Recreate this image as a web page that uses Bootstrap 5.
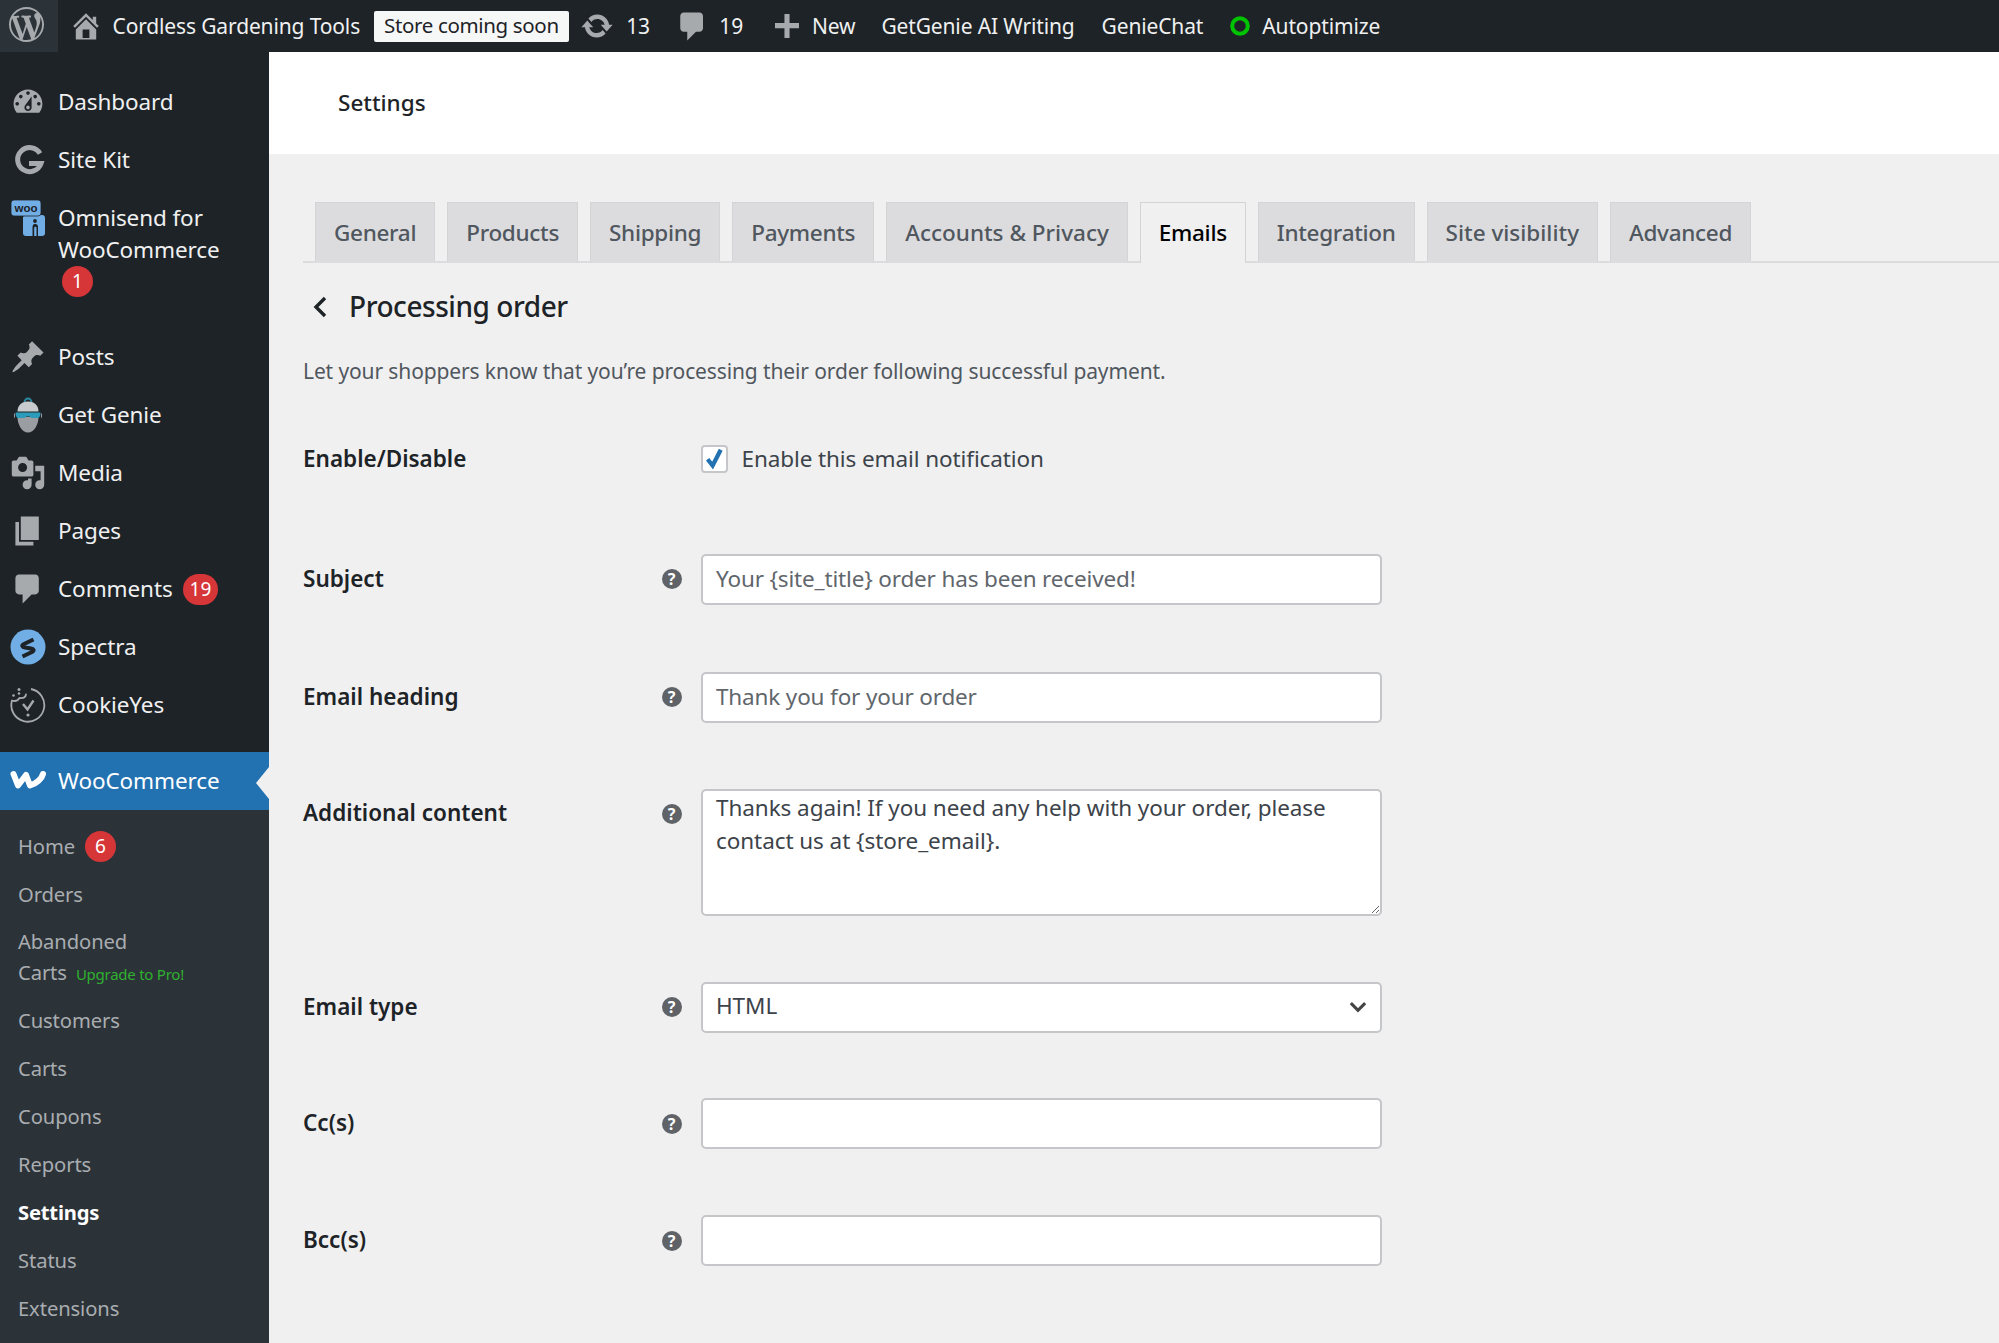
<!DOCTYPE html>
<html lang="en">
<head>
<meta charset="utf-8">
<title>Settings</title>
<link href="https://cdn.jsdelivr.net/npm/bootstrap@5.3.0/dist/css/bootstrap.min.css" rel="stylesheet">
<style>
html,body{height:100%;}
body{font-family:"Noto Sans","Open Sans",sans-serif;background:#f0f0f0;color:#3c434a;overflow:hidden;}
.wp-top{height:52px;flex:none;background:#1d2327;color:#f0f0f1;font-size:21px;letter-spacing:-.14px;line-height:50px;white-space:nowrap;}
.wp-logo{width:58px;height:52px;background:#2c3338;padding:7px 0 0 9px;flex:none;}
.wp-logo svg{width:35px;height:35px;fill:#a7aaad;display:block;}
.top-ico{fill:#a7aaad;flex:none;}
.ti-home{margin-left:11px;}
.tt-title{margin-left:9.500px;}
.soon{height:31px;line-height:29px;background:#f6f7f7;color:#1d2327;border-radius:2px;padding:0 10px;margin:0 11.500px 0 14px;font-size:20.5px;letter-spacing:-.35px;}
.tt-13{margin-left:12px;}
.ti-26{margin-left:24.700px;}
.tt-19{margin-left:9.700px;}
.ti-29{margin-left:29px;}
.tt-new{margin-left:9.800px;}
.tt-26{margin-left:26px;}
.tt-27{margin-left:27px;}
.tt-12{margin-left:12px;}
.split{min-height:0;}
.wp-side{width:269px;flex:none;background:#1d2327;color:#f0f0f1;font-size:22.5px;letter-spacing:-.1px;}
.side-top{padding-top:21px;}
.side-item{height:58px;padding:0 0 0 58px;position:relative;}
.side-item>svg{position:absolute;left:10px;top:50%;transform:translateY(-50%);width:36px;height:36px;}
.ico-grey{fill:#a7aaad;}
.side-multi{height:139px;padding-top:13px;line-height:32px;}
.side-multi>svg{top:11px;transform:none;height:37px;}
.side-cur{height:58px;flex:none;background:#2271b1;color:#fff;margin-top:18px;padding:0 0 0 58px;position:relative;}
.side-cur>svg{position:absolute;left:10px;top:13px;width:36px;height:28px;}
.side-cur::after{content:"";position:absolute;right:0;top:15px;border:16px solid transparent;border-right:13px solid #f0f0f0;border-left:0;}
.side-sub{background:#2c3338;color:#a9adb1;font-size:20.2px;padding:12px 0 0 18px;}
.sub-item{height:48px;}
.sub-two{height:78px;line-height:31px;padding-top:8px;}
.sub-on{color:#fff;font-weight:700;letter-spacing:-.2px;}
.up-pro{color:#2fb02f;font-size:15px;letter-spacing:-.25px;margin-left:9px;}
.wp-pill{background:#d63638;color:#fff;font-weight:400;font-size:19px;letter-spacing:0;min-width:31px;height:31px;line-height:30px;padding:0 7px;border-radius:16px;display:inline-block;text-align:center;margin-left:10px;}
.pill-block{display:block;width:31px;margin-left:4px;}
.main-col{min-width:0;}
.page-head{height:102px;background:#fff;padding:0 0 1px 69px;color:#1d2327;font-size:22.5px;font-weight:500;}
.page-body{padding:48px 0 0 34px;letter-spacing:-.3px;}
.wc-tabs{border-bottom:2px solid #dcdcde;gap:12px;padding-left:12px;}
.wc-tabs .nav-link{height:59px;line-height:60px;padding:0 18px;margin-bottom:0;background:#dcdcde;border:1px solid #d4d4d6;border-bottom:0;border-radius:0;color:#50575e;font-size:22.5px;font-weight:500;letter-spacing:-.3px;}
.wc-tabs .nav-link.tab-wide{letter-spacing:0;}
.wc-tabs .nav-link.active{background:#f0f0f0;color:#000;border-color:#d4d4d6;height:61px;margin-bottom:-2px;border-bottom:0;}
.title-row{margin-top:24px;height:40px;}
.title-row h1{font-size:28px;font-weight:500;color:#1d2327;margin:0 0 0 22px;letter-spacing:-.45px;}
.back-ico{width:14px;height:22px;margin-left:10px;flex:none;}
.desc{margin:28px 0 0;height:32px;line-height:33px;font-size:21px;color:#50575e;letter-spacing:-.12px;}
.rows{margin-top:57.500px;}
.f-row{display:flex;align-items:flex-start;}
.f-lab{width:357px;flex:none;font-size:22.5px;font-weight:600;color:#1d2327;height:51px;line-height:49px;letter-spacing:0;margin:0;}
.f-help{width:41px;height:51px;flex:none;padding-left:1.500px;}
.help-dot{width:20px;height:20px;border-radius:50%;background:#5f6266;color:#fff;font-size:16px;font-weight:700;line-height:20px;text-align:center;letter-spacing:0;}
.f-field{width:681px;flex:none;}
.wc-ctl{height:51px;border:2px solid #c5c6c9;border-radius:5px;background-color:#fff;color:#3c434a;font-size:22.5px;padding:0 13px 2px;letter-spacing:-.07px;box-shadow:none;}
.wc-ctl::placeholder{color:#5f666c;opacity:1;letter-spacing:-.16px;}
textarea.wc-ctl{height:127px;line-height:33px;padding:0 13px;}
select.wc-ctl{height:51.5px;padding:0 13px 2px;background-image:url("data:image/svg+xml,%3Csvg xmlns='http://www.w3.org/2000/svg' viewBox='0 0 20 20'%3E%3Cpath d='M3.500 6.500l6.500 6.500 6.500-6.500' fill='none' stroke='%23444' stroke-width='2.800'/%3E%3C/svg%3E");background-position:right 11px center;background-size:22px;}
.wc-check{width:27px;height:28px;margin:0;border:2px solid #c5c6c9;border-radius:5px;flex:none;background-color:#fff;}
.wc-check:checked{background-color:#fff;border-color:#c5c6c9;background-size:25px;background-image:url("data:image/svg+xml,%3Csvg xmlns='http://www.w3.org/2000/svg' viewBox='0 0 20 20'%3E%3Cpath d='M4.500 10l4 5L15 2.500' fill='none' stroke='%232271b1' stroke-width='3.400'/%3E%3C/svg%3E");}
.check-txt{font-size:22.5px;margin-left:13.500px;letter-spacing:-.1px;color:#3c434a;line-height:26px;}
.row-en{height:28px;margin-bottom:81px;}
.row-en .f-lab{height:28px;line-height:28px;}
.gap67{margin-bottom:67px;}
.gap66{margin-bottom:66px;}
.gap65{margin-bottom:65px;}
.f-lab.ta-lab{height:47px;line-height:47px;}
.ta-help{padding-top:15px;}
</style>
</head>
<body class="d-flex flex-column">

<header class="wp-top d-flex align-items-center">
  <div class="wp-logo">
    <svg viewBox="0 0 20 20"><path d="M20 10c0-5.510-4.490-10-10-10C4.480 0 0 4.490 0 10c0 5.520 4.480 10 10 10 5.510 0 10-4.480 10-10zM7.780 15.370L4.370 6.220c.550-.020 1.170-.080 1.170-.080.500-.060.440-1.130-.060-1.110 0 0-1.450.110-2.370.110-.180 0-.370 0-.580-.010C4.120 2.690 6.870 1.110 10 1.110c2.330 0 4.450.870 6.050 2.340-.680-.110-1.650.390-1.650 1.580 0 .740.450 1.360.900 2.100.350.610.550 1.360.550 2.460 0 1.490-1.400 5-1.400 5l-3.030-8.370c.540-.020.820-.170.820-.170.500-.050.440-1.250-.060-1.220 0 0-1.440.120-2.380.120-.870 0-2.330-.120-2.330-.120-.500-.030-.560 1.200-.060 1.220l.920.080 1.260 3.410zM17.410 10c.240-.640.740-1.870.430-4.250.700 1.290 1.050 2.710 1.050 4.250 0 3.290-1.730 6.240-4.400 7.780.970-2.590 1.940-5.200 2.920-7.780zM6.100 18.090C3.120 16.650 1.110 13.530 1.110 10c0-1.300.230-2.480.720-3.590C3.250 10.300 4.670 14.200 6.100 18.090zm4.030-6.630l2.580 6.980c-.860.290-1.760.450-2.710.450-.790 0-1.570-.110-2.290-.330.810-2.380 1.620-4.740 2.420-7.100z"/></svg>
  </div>
  <svg class="top-ico ti-home" width="34" height="34" viewBox="0 0 20 20"><path d="M16 8.500l1.530 1.530-1.060 1.060L10 4.620l-6.470 6.470-1.060-1.060L10 2.500l4 4v-2h2v4zm-6-2.460l6 5.990V18H4v-5.970zM12 17v-5H8v5h4z"/></svg>
  <span class="tt-title">Cordless Gardening Tools</span>
  <span class="soon">Store coming soon</span>
  <svg class="top-ico" width="34" height="34" viewBox="0 0 20 20"><path d="M10.200 3.280c3.530 0 6.430 2.610 6.920 6h2.080l-3.500 4-3.500-4h2.320c-.450-1.970-2.210-3.450-4.320-3.450-1.450 0-2.730.710-3.540 1.780L4.950 5.660C6.230 4.200 8.110 3.280 10.200 3.280zm-.400 13.440c-3.520 0-6.430-2.610-6.920-6H.800l3.500-4c1.170 1.330 2.330 2.670 3.500 4H5.480c.450 1.970 2.210 3.450 4.320 3.450 1.450 0 2.730-.710 3.540-1.780l1.710 1.950c-1.280 1.460-3.150 2.380-5.250 2.380z"/></svg>
  <span class="tt-13">13</span>
  <svg class="top-ico ti-26" width="35" height="35" viewBox="0 0 20 20"><path d="M5 2h9c1.100 0 2 .900 2 2v7c0 1.100-.900 2-2 2h-2l-5 5v-5H5c-1.100 0-2-.900-2-2V4c0-1.100.900-2 2-2z"/></svg>
  <span class="tt-19">19</span>
  <svg class="top-ico ti-29" width="30" height="30" viewBox="0 0 20 20"><path d="M18 8v3.500h-6.300V18H8.300V11.500H2V8h6.300V2h3.400v6z"/></svg>
  <span class="tt-new">New</span>
  <span class="tt-26">GetGenie AI Writing</span>
  <span class="tt-27">GenieChat</span>
  <svg class="tt-27" width="20" height="20" viewBox="0 0 20 20"><circle cx="10" cy="10" r="7.800" fill="none" stroke="#00c400" stroke-width="4"/></svg>
  <span class="tt-12">Autoptimize</span>
</header>

<div class="d-flex flex-grow-1 split">
  <nav class="wp-side d-flex flex-column">
    <div class="side-top">
      <div class="side-item d-flex align-items-center"><svg class="ico-grey" viewBox="0 0 20 20"><path d="M3.760 16h12.480c1.100-1.370 1.760-3.110 1.760-5 0-4.420-3.580-8-8-8s-8 3.580-8 8c0 1.890.660 3.630 1.760 5zM10 4c.550 0 1 .450 1 1s-.450 1-1 1-1-.450-1-1 .450-1 1-1zM6 6c.550 0 1 .450 1 1s-.450 1-1 1-1-.450-1-1 .450-1 1-1zm8 0c.550 0 1 .450 1 1s-.450 1-1 1-1-.450-1-1 .450-1 1-1zm-5.370 5.550L12 7v6c0 1.100-.900 2-2 2s-2-.900-2-2c0-.570.240-1.080.630-1.450zM4 10c.550 0 1 .450 1 1s-.450 1-1 1-1-.450-1-1 .450-1 1-1zm12 0c.550 0 1 .450 1 1s-.450 1-1 1-1-.450-1-1 .450-1 1-1zm-5 3c0-.550-.450-1-1-1s-1 .450-1 1 .450 1 1 1 1-.450 1-1z"/></svg>Dashboard</div>
      <div class="side-item d-flex align-items-center"><svg viewBox="0 0 36 36"><path d="M30 11.500A12 12 0 1 0 31 21.500H19" fill="none" stroke="#a7aaad" stroke-width="5"/></svg>Site Kit</div>
      <div class="side-item side-multi">
        <svg viewBox="0 0 36 37"><path d="M15 15h17a3 3 0 0 1 3 3v15a3 3 0 0 1-3 3H16a3 3 0 0 1-3-3V17z" fill="#72aee6"/><rect x="1" y="0" width="30" height="16" rx="3" fill="#72aee6" stroke="#1d2327" stroke-width=".8"/><text x="16" y="12" font-family="Liberation Sans,sans-serif" font-weight="700" font-size="11.500" letter-spacing="0" text-anchor="middle" fill="#1d2327">woo</text><circle cx="25" cy="21" r="1.900" fill="#1d2327"/><path d="M22.500 36v-9c0-2.500 1.500-3 3-3s2.500 1 2.500 3v9h-1.500v-8.500c-.5-1-1.800-1-2.300 0V36z" fill="#1d2327"/></svg>
        Omnisend for WooCommerce<span class="wp-pill pill-block">1</span>
      </div>
      <div class="side-item d-flex align-items-center"><svg class="ico-grey" viewBox="0 0 20 20"><path d="M10.440 3.020l1.820-1.820 6.360 6.350-1.830 1.820c-1.050-.680-2.480-.570-3.410.360l-.750.750c-.920.930-1.040 2.350-.350 3.410l-1.830 1.820-2.410-2.410-2.800 2.790c-.420.420-3.380 2.710-3.800 2.290s1.860-3.390 2.280-3.810l2.790-2.790L4.100 9.360l1.830-1.820c1.050.690 2.480.570 3.400-.360l.750-.750c.930-.920 1.050-2.350.360-3.410z"/></svg>Posts</div>
      <div class="side-item d-flex align-items-center"><svg viewBox="0 0 36 36"><path d="M14.500 5a3.500 3.500 0 0 1 7 0" fill="none" stroke="#2a8ba5" stroke-width="1.800"/><path d="M7.500 20c0 6 3 12 6 14 3 2 6 2 9 0 3-2 6-8 6-14z" fill="#9a9ea3"/><path d="M18 4.500C11 4.500 7.500 9 7.500 14.500h21C28.500 9 25 4.500 18 4.500z" fill="#c8cbce"/><path d="M5.500 15.500c0 2.500.5 4.500 2 5.500h7l2-1.500h3l2 1.500h7c1.500-1 2-3 2-5.500z" fill="#2a9bb8"/><path d="M5 16c-1.500 1-1.500 4 0 5.500zM31 16c1.500 1 1.500 4 0 5.500z" fill="#9a9ea3"/></svg>Get Genie</div>
      <div class="side-item d-flex align-items-center"><svg class="ico-grey" viewBox="0 0 20 20"><path d="M13 11V4c0-.550-.450-1-1-1h-1.670L9 1H5L3.670 3H2c-.550 0-1 .450-1 1v7c0 .550.450 1 1 1h10c.550 0 1-.450 1-1zM7 4.500c1.380 0 2.500 1.120 2.500 2.500S8.380 9.500 7 9.500 4.500 8.380 4.500 7 5.620 4.500 7 4.500zM14 6h5v10.500c0 1.380-1.120 2.500-2.500 2.500S14 17.880 14 16.500s1.120-2.500 2.500-2.500c.170 0 .340.020.500.050V9h-3V6zm-4 8.050V13h2v3.500c0 1.380-1.120 2.500-2.500 2.500S7 17.880 7 16.500 8.120 14 9.500 14c.170 0 .340.020.500.050z"/></svg>Media</div>
      <div class="side-item d-flex align-items-center"><svg class="ico-grey" viewBox="0 0 20 20"><path d="M6 15V2h10v13H6zm-1 1h8v2H3V5h2v11z"/></svg>Pages</div>
      <div class="side-item d-flex align-items-center"><svg class="ico-grey" viewBox="0 0 20 20"><path d="M5 2h9c1.100 0 2 .900 2 2v7c0 1.100-.900 2-2 2h-2l-5 5v-5H5c-1.100 0-2-.900-2-2V4c0-1.100.900-2 2-2z"/></svg>Comments<span class="wp-pill">19</span></div>
      <div class="side-item d-flex align-items-center"><svg viewBox="0 0 36 36"><circle cx="18" cy="18" r="17.500" fill="#72aee6"/><path d="M23.500 10.500L14 15c-3 1.500-1.500 3.200 1 3.600l6 .8c3 .6 3.500 2.100 1 3.600l-9.500 4.500" fill="none" stroke="#1d2327" stroke-width="4" stroke-linejoin="round"/></svg>Spectra</div>
      <div class="side-item d-flex align-items-center"><svg viewBox="0 0 36 36" fill="none" stroke="#a7aaad" stroke-width="1.800"><path d="M21 2a16.500 16.500 0 1 1-19 11.500c3 1 6 0 7.500-2.500 3.500.5 6-1 6.500-3.500 2 0 4-1.500 5-5.500z" stroke-linejoin="round" stroke-dasharray="96 15" stroke-dashoffset="0"/><path d="M13 17l4.500 5.500 6-9" stroke-width="2.400"/><circle cx="18" cy="28" r="1.600" fill="#a7aaad" stroke="none"/><circle cx="9" cy="2.500" r="1.500" fill="#a7aaad" stroke="none"/><circle cx="9" cy="6.500" r="1.300" fill="#a7aaad" stroke="none"/><circle cx="3.500" cy="8.500" r="1.300" fill="#a7aaad" stroke="none"/></svg>CookieYes</div>
    </div>
    <div class="side-cur d-flex align-items-center"><svg viewBox="0 0 36 28"><path d="M3.500 9l4.500 11.500L16 10l4 10.500C26.500 18.500 32 13.500 33 9" fill="none" stroke="#fff" stroke-width="6" stroke-linejoin="round" stroke-linecap="round"/></svg>WooCommerce</div>
    <div class="side-sub flex-grow-1">
      <div class="sub-item d-flex align-items-center">Home<span class="wp-pill">6</span></div>
      <div class="sub-item d-flex align-items-center">Orders</div>
      <div class="sub-two">Abandoned<br>Carts<span class="up-pro">Upgrade to Pro!</span></div>
      <div class="sub-item d-flex align-items-center">Customers</div>
      <div class="sub-item d-flex align-items-center">Carts</div>
      <div class="sub-item d-flex align-items-center">Coupons</div>
      <div class="sub-item d-flex align-items-center">Reports</div>
      <div class="sub-item d-flex align-items-center sub-on">Settings</div>
      <div class="sub-item d-flex align-items-center">Status</div>
      <div class="sub-item d-flex align-items-center">Extensions</div>
    </div>
  </nav>

  <main class="flex-grow-1 main-col">
    <div class="page-head d-flex align-items-center">Settings</div>
    <div class="page-body">
      <ul class="nav nav-tabs wc-tabs">
        <li class="nav-item"><a class="nav-link" href="#">General</a></li>
        <li class="nav-item"><a class="nav-link" href="#">Products</a></li>
        <li class="nav-item"><a class="nav-link" href="#">Shipping</a></li>
        <li class="nav-item"><a class="nav-link" href="#">Payments</a></li>
        <li class="nav-item"><a class="nav-link tab-wide" href="#">Accounts &amp; Privacy</a></li>
        <li class="nav-item"><a class="nav-link active" href="#">Emails</a></li>
        <li class="nav-item"><a class="nav-link" href="#">Integration</a></li>
        <li class="nav-item"><a class="nav-link tab-wide" href="#">Site visibility</a></li>
        <li class="nav-item"><a class="nav-link" href="#">Advanced</a></li>
      </ul>
      <div class="title-row d-flex align-items-center">
        <svg class="back-ico" viewBox="0 0 14 22"><path d="M12 2L3 11l9 9" fill="none" stroke="#1d2327" stroke-width="3.400"/></svg>
        <h1>Processing order</h1>
      </div>
      <p class="desc">Let your shoppers know that you’re processing their order following successful payment.</p>
      <form class="rows">
        <div class="f-row row-en">
          <label class="f-lab" for="en">Enable/Disable</label>
          <div class="f-help"></div>
          <div class="d-flex align-items-center"><input id="en" class="form-check-input wc-check" type="checkbox" checked><span class="check-txt">Enable this email notification</span></div>
        </div>
        <div class="f-row gap67">
          <label class="f-lab" for="su">Subject</label>
          <div class="f-help d-flex align-items-center"><div class="help-dot">?</div></div>
          <div class="f-field"><input id="su" class="form-control wc-ctl" placeholder="Your {site_title} order has been received!"></div>
        </div>
        <div class="f-row gap66">
          <label class="f-lab" for="he">Email heading</label>
          <div class="f-help d-flex align-items-center"><div class="help-dot">?</div></div>
          <div class="f-field"><input id="he" class="form-control wc-ctl" placeholder="Thank you for your order"></div>
        </div>
        <div class="f-row gap66">
          <label class="f-lab ta-lab" for="ad">Additional content</label>
          <div class="f-help ta-help"><div class="help-dot">?</div></div>
          <div class="f-field"><textarea id="ad" class="form-control wc-ctl">Thanks again! If you need any help with your order, please contact us at {store_email}.</textarea></div>
        </div>
        <div class="f-row gap65">
          <label class="f-lab" for="ty">Email type</label>
          <div class="f-help d-flex align-items-center"><div class="help-dot">?</div></div>
          <div class="f-field"><select id="ty" class="form-select wc-ctl"><option>HTML</option></select></div>
        </div>
        <div class="f-row gap66">
          <label class="f-lab" for="cc">Cc(s)</label>
          <div class="f-help d-flex align-items-center"><div class="help-dot">?</div></div>
          <div class="f-field"><input id="cc" class="form-control wc-ctl"></div>
        </div>
        <div class="f-row">
          <label class="f-lab" for="bc">Bcc(s)</label>
          <div class="f-help d-flex align-items-center"><div class="help-dot">?</div></div>
          <div class="f-field"><input id="bc" class="form-control wc-ctl"></div>
        </div>
      </form>
    </div>
  </main>
</div>
<script src="https://cdn.jsdelivr.net/npm/bootstrap@5.3.0/dist/js/bootstrap.bundle.min.js"></script>
</body>
</html>
